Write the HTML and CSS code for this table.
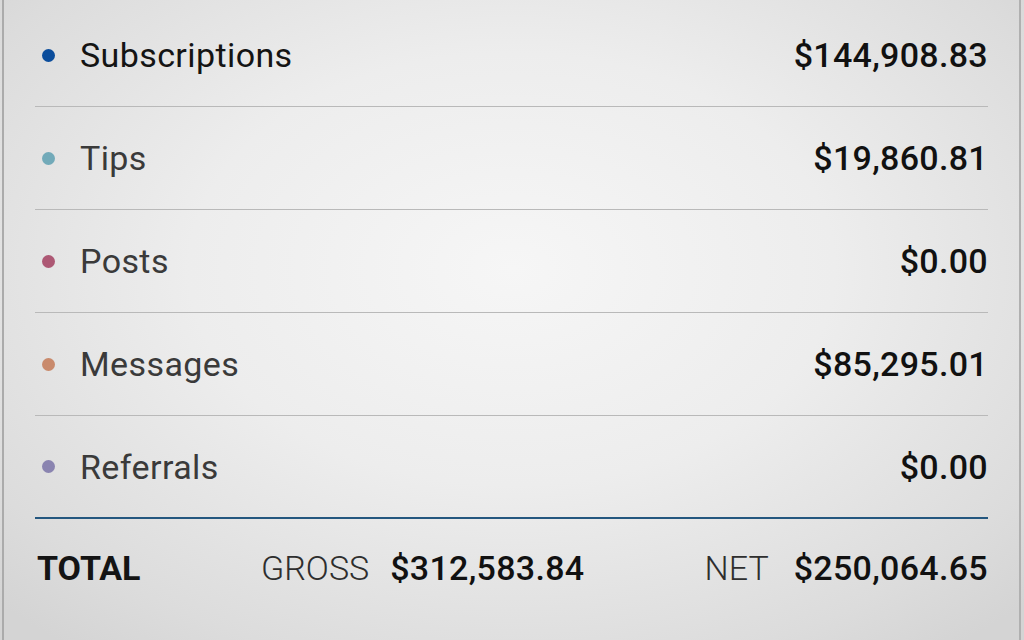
FILE: index.html
```html
<!DOCTYPE html>
<html>
<head>
<meta charset="utf-8">
<link rel="stylesheet" href="styles.css">
</head>
<body>
<div class="card">
  <div class="list">
    <div class="row">
      <span class="dot dot-subs"></span>
      <span class="label label-active">Subscriptions</span>
      <span class="value">$144,908.83</span>
    </div>
    <div class="row">
      <span class="dot dot-tips"></span>
      <span class="label">Tips</span>
      <span class="value">$19,860.81</span>
    </div>
    <div class="row">
      <span class="dot dot-posts"></span>
      <span class="label">Posts</span>
      <span class="value">$0.00</span>
    </div>
    <div class="row">
      <span class="dot dot-msgs"></span>
      <span class="label">Messages</span>
      <span class="value">$85,295.01</span>
    </div>
    <div class="row row-last">
      <span class="dot dot-refs"></span>
      <span class="label">Referrals</span>
      <span class="value">$0.00</span>
    </div>
  </div>
  <div class="total">
    <span class="total-title">TOTAL</span>
    <span class="group gross">
      <span class="group-label">GROSS</span>
      <span class="group-value">$312,583.84</span>
    </span>
    <span class="group net">
      <span class="group-label">NET</span>
      <span class="group-value">$250,064.65</span>
    </span>
  </div>
</div>
</body>
</html>
```

FILE: styles.css
```css
html, body {
  margin: 0;
  padding: 0;
  height: 100%;
}
body {
  width: 1024px;
  height: 640px;
  overflow: hidden;
  font-family: Roboto, "Liberation Sans", sans-serif;
  background: radial-gradient(ellipse 70% 75% at 50% 42%, #f6f6f6 0%, #ededed 45%, #dcdcdc 85%, #d4d4d4 100%);
  padding: 0 3px 0 2px;
  box-sizing: border-box;
}
.card {
  height: 640px;
  border-left: 2px solid #ababab;
  border-right: 2px solid #b0b0b0;
  padding: 4px 31px 0 31px;
  box-sizing: border-box;
}
.list {
  display: flex;
  flex-direction: column;
}
.row {
  height: 102px;
  border-bottom: 1px solid #b9b9b9;
  display: flex;
  align-items: center;
}
.row-last {
  border-bottom: 2px solid #24577f;
  height: 101px;
}
.dot {
  width: 13px;
  height: 13px;
  border-radius: 50%;
  margin-left: 7px;
  margin-right: 25px;
  flex: none;
}
.dot-subs { background: #0b4d9c; }
.dot-tips { background: #72aab9; }
.dot-posts { background: #ad5874; }
.dot-msgs { background: #c98a6c; }
.dot-refs { background: #8a84b0; }
.label {
  font-size: 34px;
  color: #3a3a3a;
  font-weight: 400;
  letter-spacing: 0.4px;
}
.label-active {
  color: #141414;
}
.value {
  margin-left: auto;
  font-size: 34px;
  font-weight: 500;
  color: #111;
  letter-spacing: 0.3px;
}
.total {
  height: 98px;
  display: flex;
  align-items: center;
  padding-left: 2px;
}
.total-title {
  font-size: 34px;
  font-weight: 700;
  color: #141414;
  width: 224px;
}
.group {
  display: flex;
  align-items: baseline;
  gap: 21px;
}
.group-label {
  font-size: 34px;
  font-weight: 300;
  color: #2e2e2e;
}
.group-value {
  font-size: 34px;
  font-weight: 500;
  color: #111;
  letter-spacing: 0.3px;
}
.net {
  margin-left: auto;
  gap: 25px;
}
```
